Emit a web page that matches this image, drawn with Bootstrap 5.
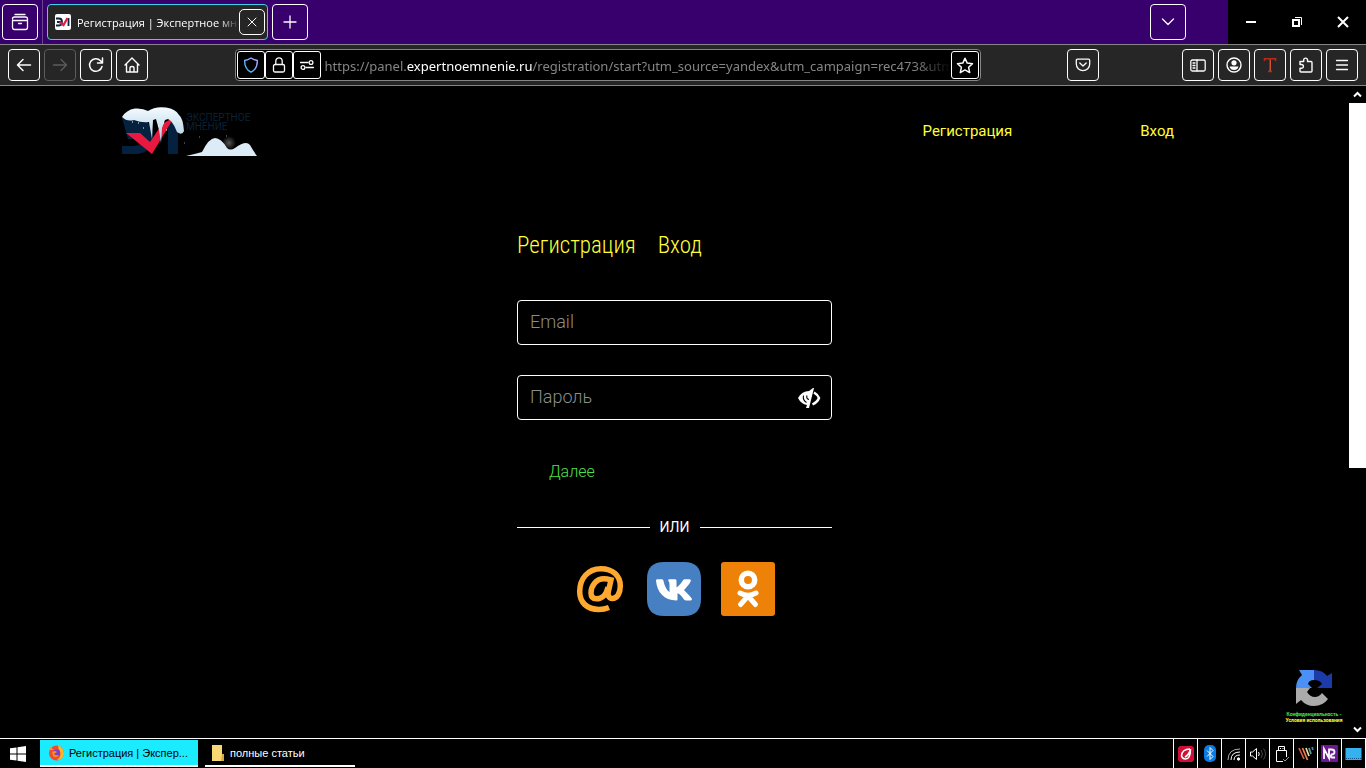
<!DOCTYPE html>
<html lang="ru">
<head>
<meta charset="utf-8">
<meta name="viewport" content="width=device-width, initial-scale=1">
<title>Регистрация | Экспертное мнение</title>
<link href="https://cdn.jsdelivr.net/npm/bootstrap@5.3.0/dist/css/bootstrap.min.css" rel="stylesheet">
<style>
body{background:#000;color:#fff;font-family:"Open Sans",sans-serif;font-size:12px;overflow:hidden}
svg{display:block;flex:none}
.ln{fill:none;stroke:currentColor;stroke-width:1.3;stroke-linecap:round;stroke-linejoin:round}
.titlebar{background:#38006c;height:44px;padding-left:2px}
.box-btn{width:32px;height:32px;padding:0;border:1px solid #fff;border-radius:4px;background:transparent;color:#fbfbfe;display:flex;align-items:center;justify-content:center;flex:none}
.box-lg{width:36px;height:36px}
.box-sm{width:28px;height:28px;background:#000;border-radius:3px}
.box-btn:disabled{border-color:#5c5c5c;color:#5c5c5c}
.tab-rule{width:1px;background:#6a4591;margin:0 4px}
.browser-tab{width:221px;height:36px;border:1px solid #3fd0e8;border-radius:4px;background:#262626;padding:0 2px 0 7px}
.tab-name{flex:1;min-width:0;overflow:hidden;white-space:nowrap;font-size:11px;line-height:18px;padding:1px 0 0 6px;-webkit-mask-image:linear-gradient(to right,#000 88%,transparent)}
.tab-close{width:26px;height:26px;border-radius:5px}
.tab-list{margin-right:42px}
.win-btn{width:46px;border:0;background:#000;color:#fff;display:flex;align-items:center;justify-content:center;padding:0}
.toolbar{background:#262626;height:42px;border-top:1px solid #858585;border-bottom:1px solid #858585;padding:0 8px}
.spacer{flex:1 1 0}
.spacer-end{flex:0 0 83px}
.urlbar{flex:0 1 746px;min-width:0;height:32px;border:1px solid #858585;border-radius:4px;background:#000;padding:0 1px}
.url-text{flex:1;min-width:0;overflow:hidden;white-space:nowrap;color:#858585;font-family:"Noto Sans",sans-serif;font-size:13px;line-height:20px;margin-left:4px;padding-top:1px;outline:0;-webkit-mask-image:linear-gradient(to right,#000 94%,transparent)}
.url-text span{color:#fff}
.site{font-family:Roboto,sans-serif}
.site-header{padding:20px 175px 0 120px}
.site-nav{gap:128px;font-size:15px}
.site a{color:#ff3;text-decoration:none}
.signup{width:315px;max-width:100%;margin:74px auto 0}
.signup-tabs{font-family:"Roboto Condensed",Roboto,sans-serif;font-weight:300;font-size:23px;line-height:32px;gap:22px;margin-bottom:38px}
.field{height:45px;margin-bottom:30px}
.field input{width:100%;height:45px;background:#000;border:1px solid #fff;border-radius:4px;color:#fff;font-weight:300;font-size:18px;line-height:24px;padding:0 46px 2px 12px}
.field input::placeholder{color:#8c8c8c;opacity:1}
.eye{right:11px;top:11px;width:24px;height:24px;border:0;padding:0;background:none;color:#fff}
.next-btn{background:none;border:0;color:#4be24b;font-weight:300;font-size:16px;line-height:24px;padding:10px 32px}
.divider{gap:10px;font-size:14px;line-height:20px;margin:23px 0 25px}
.divider::before,.divider::after{content:"";flex:1;height:1px;background:#fff}
.socials{gap:20px;padding-left:56px}
.captcha{right:6px;bottom:15px;width:58px;font-size:5px;line-height:6px;text-align:center;font-weight:700}
.captcha .privacy{color:#4be24b}
.scroll-col{width:17px}
.scroll-arrow{height:17px;border:0;background:#000;color:#fff;padding:0;display:flex;align-items:center;justify-content:center}
.scroll-track{flex:1}
.scroll-thumb{height:59%;background:#fff}
.taskbar{height:30px;border-top:1px solid #fff;font-family:"Liberation Sans",sans-serif;font-size:11px;line-height:16px}
.start{width:40px;border:0;background:#000;color:#fff;padding:0 0 0 10px}
.task{height:27px;border:0;border-bottom:2px solid #fff;margin-top:1px;background:#000;color:#fff;padding:0 6px 0 8px;white-space:nowrap}
.task.current{width:158px;background:#1aebff;color:#000;border-bottom-color:#fff}
.task.folder{width:150px;margin-left:7px;padding-left:5px}
.tray{border-left:1px solid #fff}
.tray button{width:24px;height:29px;border:0;border-right:1px solid #fff;background:#000;color:#fff;padding:0;display:flex;align-items:center;justify-content:center}
</style>
</head>
<body class="d-flex flex-column vh-100">

<header>
  <div class="titlebar d-flex">
    <div class="d-flex align-items-center">
      <button class="box-btn box-lg" aria-label="Недавний просмотр"><svg class="ln" width="18" height="18" viewBox="0 0 18 18"><path d="M4 1.500h10M1.500 6Q1.500 4 3.500 4h11Q16.500 4 16.500 6V14.500Q16.500 16.500 14.500 16.500H3.500Q1.500 16.500 1.500 14.500V7.500H16.500M7.500 10.500h3"/></svg></button>
    </div>
    <div class="tab-rule"></div>
    <div class="d-flex align-items-center gap-1">
      <div class="browser-tab d-flex align-items-center">
        <svg width="16" height="16" viewBox="0 0 16 16"><rect width="16" height="16" rx="2" fill="#fff"/><path d="M1 4.500h3q3 0 3 3.500t-3 3.500H1M2 8h4M13.500 4v8" fill="none" stroke="#0b2545" stroke-width="1.800"/><path d="M4.500 8l4 3 4-7" fill="none" stroke="#e21f43" stroke-width="2.200"/></svg>
        <div class="tab-name">Регистрация | Экспертное мнение</div>
        <button class="box-btn tab-close" aria-label="Закрыть вкладку"><svg class="ln" width="10" height="10" viewBox="0 0 10 10"><path d="M1 1l8 8M9 1L1 9" stroke-width="1"/></svg></button>
      </div>
      <button class="box-btn box-lg" aria-label="Новая вкладка"><svg class="ln" width="14" height="14" viewBox="0 0 14 14"><path d="M7 1v12M1 7h12"/></svg></button>
    </div>
    <div class="tab-list d-flex align-items-center ms-auto">
      <button class="box-btn box-lg" aria-label="Список вкладок"><svg class="ln" width="14" height="8" viewBox="0 0 14 8"><path d="M1.500 1L7 6.500 12.500 1"/></svg></button>
    </div>
    <button class="win-btn" aria-label="Свернуть"><svg width="10" height="10"><path d="M0 5h10" stroke="#fff" stroke-width="2"/></svg></button>
    <button class="win-btn" aria-label="Восстановить"><svg width="10" height="10" fill="none" stroke="#fff"><path d="M1 3h6v6H1z" stroke-width="2"/><path d="M3 .5h6.500V8"/></svg></button>
    <button class="win-btn" aria-label="Закрыть"><svg width="12" height="12"><path d="M1 1l10 10M11 1L1 11" stroke="#fff" stroke-width="2"/></svg></button>
  </div>

  <div class="toolbar d-flex align-items-center">
    <div class="d-flex gap-1">
      <button class="box-btn" aria-label="Назад"><svg class="ln" width="16" height="16" viewBox="0 0 16 16"><path d="M14.500 8H1.500M7 2.500L1.500 8L7 13.500" stroke-width="1.500"/></svg></button>
      <button class="box-btn" disabled aria-label="Вперёд"><svg class="ln" width="16" height="16" viewBox="0 0 16 16"><path d="M1.500 8h13M9 2.500L14.500 8L9 13.500"/></svg></button>
      <button class="box-btn" aria-label="Обновить"><svg class="ln" width="16" height="16" viewBox="0 0 16 16"><path d="M14 9.500A6.300 6.300 0 1 1 12.500 3.700L14 5.500M14.500 1v5h-5" stroke-width="1.500"/></svg></button>
      <button class="box-btn" aria-label="Домой"><svg class="ln" width="16" height="16" viewBox="0 0 16 16"><path d="M1 8l7-7 7 7M2.500 7v8h11V7M6 15v-4q0-1.500 2-1.500t2 1.500v4" stroke-width="1.400"/></svg></button>
    </div>
    <div class="spacer"></div>
    <div class="urlbar d-flex align-items-center">
      <button class="box-btn box-sm" aria-label="Защита"><svg width="16" height="16" viewBox="0 0 16 16" fill="none"><defs><linearGradient id="shield" x1="0" x2="1" y1="1" y2="0"><stop stop-color="#33c3ff"/><stop offset="1" stop-color="#b6a4ff"/></linearGradient></defs><path d="M8 1Q11 3 14.300 3.500C14.500 9 12.500 13 8 15.200C3.500 13 1.500 9 1.700 3.500Q5 3 8 1z" stroke="url(#shield)" stroke-width="1.400"/></svg></button>
      <button class="box-btn box-sm" aria-label="Соединение"><svg class="ln" width="14" height="16" viewBox="0 0 14 16"><rect x="1.500" y="7.500" width="11" height="7.500" rx="1.500"/><path d="M3.800 7.500V4a3.200 3.200 0 0 1 6.400 0v3.500"/></svg></button>
      <button class="box-btn box-sm" aria-label="Разрешения"><svg class="ln" width="16" height="12" viewBox="0 0 16 12"><path d="M1.500 3.500H9M7 8.500h7.500"/><circle cx="12" cy="3.500" r="1.900"/><circle cx="4" cy="8.500" r="1.900"/></svg></button>
      <div class="url-text" role="textbox" contenteditable="true" spellcheck="false" aria-label="Адрес">https://panel.<span>expertnoemnenie.ru</span>/registration/start?utm_source=yandex&amp;utm_campaign=rec473&amp;utm_medium=cpc</div>
      <button class="box-btn box-sm" aria-label="Добавить в закладки"><svg class="ln" width="18" height="17" viewBox="0 0 18 17"><path d="M9 1.200l2.200 4.900 5.300.6-3.900 3.600 1.100 5.300L9 12.900l-4.700 2.700 1.100-5.300L1.500 6.700l5.300-.6z" stroke-width="1.500"/></svg></button>
    </div>
    <div class="spacer"></div>
    <button class="box-btn" aria-label="Pocket"><svg class="ln" width="16" height="14" viewBox="0 0 16 14"><path d="M2.500 1.200h11q1.200 0 1.200 1.300V6a6.700 6.700 0 0 1-13.400 0V2.500q0-1.300 1.200-1.300zM4.800 5L8 8l3.200-3"/></svg></button>
    <div class="spacer-end"></div>
    <div class="d-flex gap-1">
      <button class="box-btn" aria-label="Боковая панель"><svg class="ln" width="16" height="13" viewBox="0 0 16 13"><rect x=".8" y="1" width="14.400" height="11" rx="1.500"/><path d="M7 1v11M3 4h2M3 6.500h2M3 9h2"/></svg></button>
      <button class="box-btn" aria-label="Аккаунт"><svg width="16" height="16" viewBox="0 0 16 16"><circle cx="8" cy="8" r="7" fill="none" stroke="#fff" stroke-width="1.400"/><circle cx="8" cy="5.800" r="2.600" fill="#fff"/><path d="M3.500 9.500h9Q11.500 13 8 13T3.500 9.500z" fill="#fff"/></svg></button>
      <button class="box-btn" aria-label="Расширение"><svg width="16" height="16" viewBox="0 0 16 16"><path d="M2.500 4V1.800h11V4M8 2v12M6 14.500h4" fill="none" stroke="#b92a19" stroke-width="1.600"/><path d="M8.500 3v11" stroke="#e0583c" stroke-width=".8"/></svg></button>
      <button class="box-btn" aria-label="Расширения"><svg class="ln" width="16" height="16" viewBox="0 0 16 16"><path d="M2 4.500h3.700V3a1.900 1.900 0 0 1 3.800 0v1.500H13q1 0 1 1V14q0 1-1 1H3q-1 0-1-1v-2.700h1.500a1.900 1.900 0 0 0 0-3.800H2z" stroke-width="1.400"/></svg></button>
      <button class="box-btn" aria-label="Меню"><svg class="ln" width="14" height="12" viewBox="0 0 14 12"><path d="M1.500 1.500h11M1.500 6h11M1.500 10.500h11"/></svg></button>
    </div>
  </div>
</header>

<div class="d-flex flex-grow-1">
  <main class="site flex-grow-1 position-relative">
    <div class="site-header d-flex justify-content-between">
      <a href="#" aria-label="Экспертное мнение"><svg width="137" height="50" viewBox="0 0 137 50">
        <defs>
          <linearGradient id="snow" x1="0" y1="0" x2="0" y2="1"><stop stop-color="#f4fbff"/><stop offset="1" stop-color="#a9cde2"/></linearGradient>
          <radialGradient id="glow"><stop stop-color="#555"/><stop offset="1" stop-color="#000"/></radialGradient>
        </defs>
        <path d="M2 12h14q17 2 17 18 0 16-16 18H2v-8h12q9-1 9-7H8M48 15h10v33H48z" fill="#04213f"/>
        <path d="M6 27h14l10 9 12-18 9-5h2L32 48z" fill="#e9183f"/>
        <path d="M2 11Q6 4 15 2.500 23 2 28 5 35 0 46 1.500 56 3 59 9 63 12 64 25 62 30 57 26 55 20 51 15L48 13 45 14 42 22 41 37 39 24 36 13 33 14 32 33 29 16Q22 17 14 14 7 16 2 11z" fill="url(#snow)"/>
        <path d="M18 17h1M23 22h1M12 16h1M46 24h1M43 17h1M38 20h1" stroke="#fff"/>
        <text x="66" y="15" font-family="Roboto, sans-serif" font-size="10" fill="#0c2136">ЭКСПЕРТНОЕ</text>
        <text x="66" y="24" font-family="Roboto, sans-serif" font-size="10" fill="#0c2136">МНЕНИЕ</text>
        <circle cx="109" cy="37" r="7" fill="url(#glow)"/>
        <path d="M66 50q9-2 16-4Q89 32 95 32q6 0 12 10 3 3 8 0 11-8 15-3 4 7 7 11z" fill="#dcebf6"/>
        <path d="M64 37h1M106 30h1M79 31h1" stroke="#888"/>
      </svg></a>
      <nav class="site-nav d-flex align-items-center" aria-label="Сайт"><a href="#reg">Регистрация</a><a href="#login">Вход</a></nav>
    </div>

    <form class="signup" id="reg">
      <div class="signup-tabs d-flex"><a href="#reg">Регистрация</a><a href="#login">Вход</a></div>
      <div class="field"><label class="visually-hidden" for="email">Email</label><input id="email" type="email" placeholder="Email"></div>
      <div class="field position-relative"><label class="visually-hidden" for="pass">Пароль</label><input id="pass" type="password" placeholder="Пароль">
        <button class="eye position-absolute" type="button" aria-label="Показать пароль"><svg width="24" height="24" viewBox="0 0 24 24"><path d="M1 12Q5 5 12 5l4-3h1l-5 20H9l1-3Q4 18 1 12z" fill="#fff"/><path d="M6.500 9.500q-1 4.500 3 7M10 9.500q-1 3.500 2 4" fill="none" stroke="#000" stroke-width="1.100"/><path d="M17 6.500q3.500 2 5 5.500-1.500 4-6.500 6.500" fill="none" stroke="#fff" stroke-width="2.500"/></svg></button>
      </div>
      <button class="next-btn" type="button">Далее</button>
      <div class="divider d-flex align-items-center">ИЛИ</div>
      <div class="socials d-flex">
        <a href="#mail" aria-label="Mail.ru"><svg width="54" height="54" viewBox="0 0 54 54" fill="none" stroke="#ffa930" stroke-width="5.500"><path d="M36 45.500Q31 47.500 26 47.500C14 47.500 6.700 40.500 6.700 29.500C6.700 16.500 15 6.700 28 6.700C40 6.700 47.300 14 47.300 24C47.300 31.500 44 36.500 39.500 36.500C35.500 36.500 34.500 33.500 35.500 29L38 17.800Q34 16.800 31 16.800C23 16.800 18 24 18 31C18 35 20 36.800 23.500 36.800C29.500 36.800 33.500 32 35 25"/></svg></a>
        <a href="#vk" aria-label="ВКонтакте"><svg width="54" height="54" viewBox="0 0 54 54"><path d="M17 0H37Q54 0 54 17V37Q54 54 37 54H17Q0 54 0 37V17Q0 0 17 0z" fill="#4680c2"/><path d="M29.500 38.500C17 38.500 10 30 9 18.500Q9 17.300 10.500 17.300H14.500Q16 17.300 16.400 18.600C17.500 24 20 29 22.500 30V22Q22.500 20 21.200 18.500Q21 17.300 22.500 17.300H28.200Q29.500 17.300 29.500 18.800V25.600C32 24 35 20 36.200 18Q36.600 17.300 37.800 17.300H42.200Q44.400 17.300 43.700 19.200C42 23 37.500 27.300 37 28C38 29.500 43 33.500 44.800 36.800Q45.500 38.500 43.500 38.500H39.300Q37.800 38.500 37 37.400C34.500 34 32 31.500 30.500 31.300V37.300Q30.500 38.500 29.500 38.500z" fill="#fff"/></svg></a>
        <a href="#ok" aria-label="Одноклассники"><svg width="54" height="54" viewBox="0 0 54 54"><rect width="54" height="54" rx="3" fill="#ee8208"/><circle cx="27" cy="18" r="6.700" fill="none" stroke="#fff" stroke-width="5.500"/><path d="M19 31Q27 35.500 35 31M27 34L19.500 42.500M27 34L34.500 42.500" fill="none" stroke="#fff" stroke-width="5" stroke-linecap="round"/></svg></a>
      </div>
    </form>

    <div class="captcha position-absolute d-flex flex-column align-items-center">
      <svg class="mb-1" width="38" height="38" viewBox="0 0 38 38"><path d="M1 19Q1 11 7 6L4 1H19V11Q14 11 13 15L17 19z" fill="#4a90f5"/><path d="M19 1Q28 1 32 7L37 4V19H22L27 15Q25 11 19 11z" fill="#1c3aa9"/><path d="M1 19L15 19 12 23Q15 28 20 28 24 28 27 24L33 30Q28 37 19 37 11 37 6 31L1 35z" fill="#ababab"/></svg>
      <div class="text-nowrap privacy"><a class="privacy" href="#privacy">Конфиденциальность</a> -</div>
      <a class="text-nowrap" href="#terms">Условия использования</a>
    </div>
  </main>
  <div class="scroll-col d-flex flex-column" aria-hidden="true">
    <button class="scroll-arrow" tabindex="-1"><svg width="9" height="7"><path d="M1 5.500l3.500-3.500L8 5.500" fill="none" stroke="#fff" stroke-width="2"/></svg></button>
    <div class="scroll-track"><div class="scroll-thumb"></div></div>
    <button class="scroll-arrow" tabindex="-1"><svg width="9" height="7"><path d="M1 1.500L4.500 5 8 1.500" fill="none" stroke="#fff" stroke-width="2"/></svg></button>
  </div>
</div>

<footer class="taskbar d-flex">
  <button class="start" aria-label="Пуск"><svg width="16" height="16" viewBox="0 0 16 16" fill="#fff"><path d="M0 2.300L6.500 1.400V7.500H0zM7.500 1.200L16 0V7.500H7.500zM0 8.500H6.500V14.600L0 13.700zM7.500 8.500H16V16L7.500 14.800z"/></svg></button>
  <button class="task current d-flex align-items-center"><svg class="me-1" width="17" height="17" viewBox="0 0 17 17"><circle cx="8.500" cy="9" r="7.500" fill="#f4492f"/><path d="M10 1q6 3 6 9-1 6-7 6 5-4 3-9-2-2-2-6z" fill="#ffb42d"/><path d="M1 6Q2 2 4 2v3l3 1z" fill="#ff9428"/><circle cx="8.500" cy="9" r="3.600" fill="#7146c5"/><path d="M4 8q3-2 5 0l-3 2q2 2 5 1-3 4-6 1z" fill="#ff8a2a"/></svg><span>Регистрация | Экспер...</span></button>
  <button class="task folder d-flex align-items-center"><svg class="me-1" width="16" height="16" viewBox="0 0 16 16"><path d="M2 0h10v10l2 1v5H2z" fill="#f8d775"/><path d="M12 9h2v7h-3z" fill="#d9a93c"/></svg><span>полные статьи</span></button>
  <div class="tray d-flex ms-auto">
    <button aria-label="Антивирус"><svg width="18" height="18" viewBox="0 0 18 18"><rect x="1" y="1" width="16" height="16" rx="3" fill="#d10f36"/><path d="M13 4Q5 4 4.500 11q1 3 4 3 5 0 5-10Q12 10 8 12" fill="none" stroke="#fff" stroke-width="1.500"/></svg></button>
    <button aria-label="Bluetooth"><svg width="12" height="17" viewBox="0 0 12 17"><rect width="12" height="17" rx="5" fill="#0a7be5"/><path d="M3 5.500l6 6-3 3v-12l3 3-6 6" fill="none" stroke="#fff"/></svg></button>
    <button aria-label="Сеть"><svg width="16" height="16" viewBox="0 0 16 16" fill="none" stroke="#fff"><path d="M2 14Q2 3 14 3" stroke="#aaa"/><path d="M5 14Q5 6 14 6M8 14Q8 9 14 9"/><circle cx="12.500" cy="13" r="1.200" fill="#fff"/></svg></button>
    <button aria-label="Громкость"><svg width="18" height="14" viewBox="0 0 18 14" fill="none" stroke="#fff"><path d="M1.500 5v4h2l4 3.500v-11L3.500 5zM9.500 5q1.500 2 0 4"/><path d="M12 3q3 4 0 8M14.500 1.500q4 5 0 11" stroke="#444"/></svg></button>
    <button aria-label="USB"><svg width="16" height="18" viewBox="0 0 16 18" fill="none" stroke="#fff"><path d="M4.500 5.500V1.500h6v4M9 16.500H2.500V5.500h10V12M6 3.500h1M8.500 3.500h1"/><path d="M9 14l2 2 4-4" stroke="#999"/></svg></button>
    <button aria-label="Звук"><svg width="16" height="16" viewBox="0 0 16 16" fill="none" stroke-width="1.700"><path d="M1 2l5 11" stroke="#d55b43"/><path d="M4.500 2l5 12" stroke="#e88653"/><path d="M8 2l3 8" stroke="#eee0a5"/><path d="M11 2l2 6" stroke="#56a399"/><path d="M14 1l1 3" stroke="#4785b5"/></svg></button>
    <button aria-label="NVDA"><svg width="17" height="17" viewBox="0 0 17 17"><rect width="17" height="17" rx="1" fill="#6b1a94"/><path d="M3 14V4L8 13V4.500h2.500q3 0 3 2.500T10.500 9.500Q9 12.500 11 12.500H14" fill="none" stroke="#fff" stroke-width="1.800"/></svg></button>
    <button aria-label="Рабочий стол"><svg width="17" height="14" viewBox="0 0 17 14"><rect x=".5" y="1" width="16" height="12" fill="#35b1ed"/><path d="M1 11.500h15" stroke="#0a5790" stroke-dasharray="1 1"/></svg></button>
  </div>
</footer>
<script src="https://cdn.jsdelivr.net/npm/bootstrap@5.3.0/dist/js/bootstrap.bundle.min.js"></script>
</body>
</html>
